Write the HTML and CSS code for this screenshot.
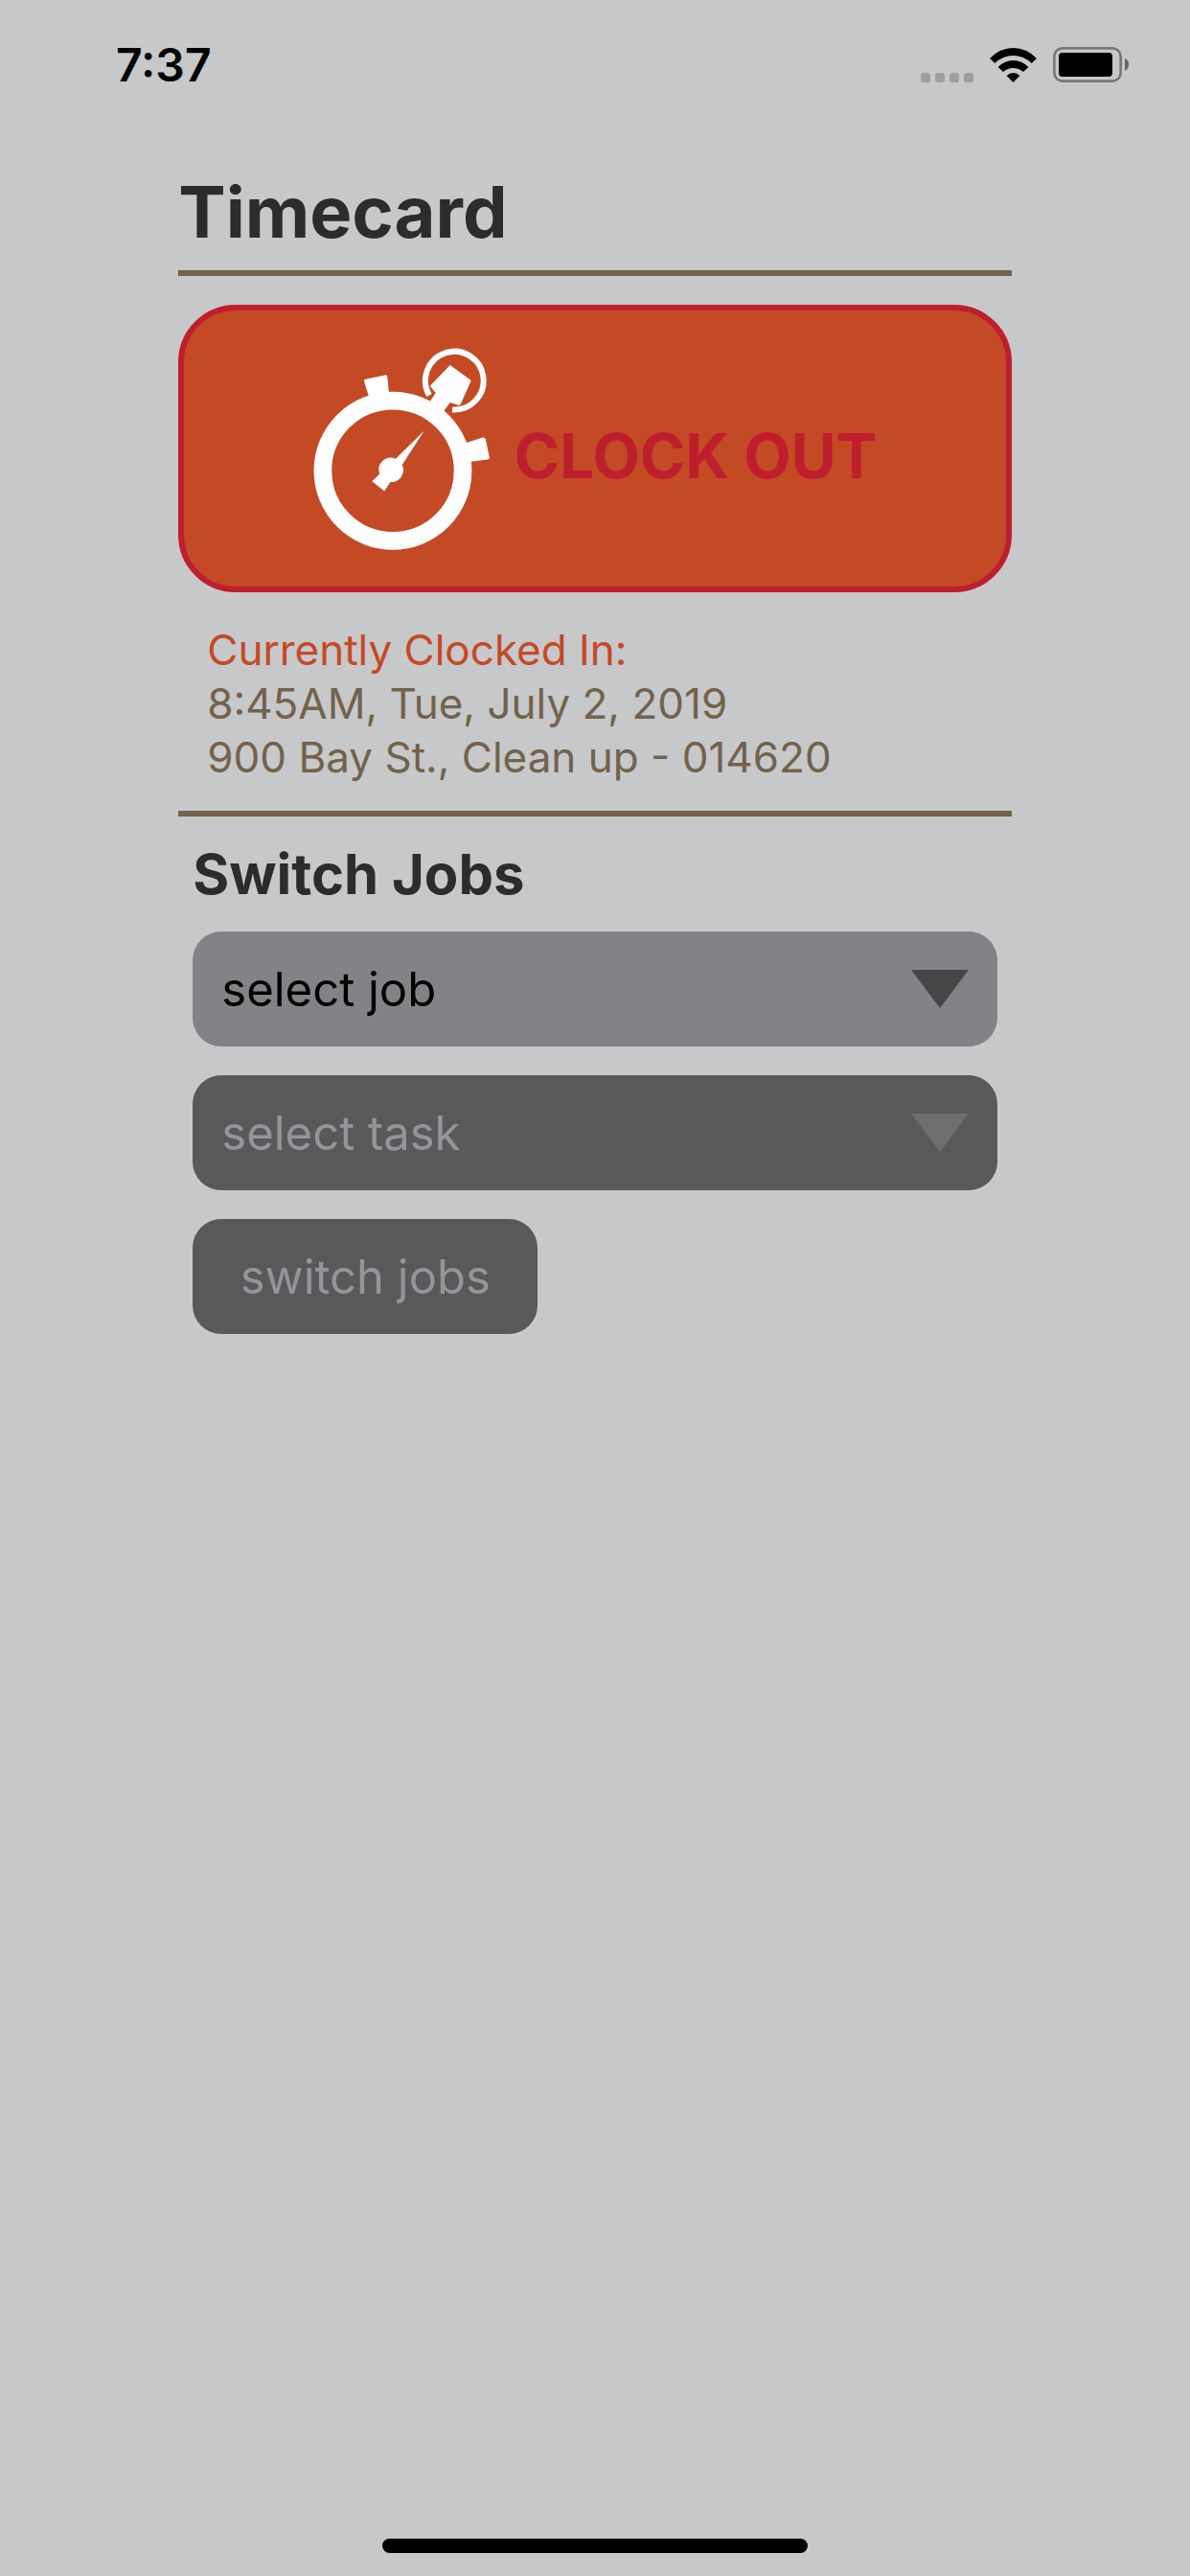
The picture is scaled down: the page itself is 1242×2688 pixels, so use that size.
FILE: index.html
```html
<!DOCTYPE html>
<html lang="en">
<head>
  <meta charset="UTF-8">
  <meta name="viewport" content="width=device-width, initial-scale=1.0">
  <title>Timecard</title>
  <link rel="stylesheet" href="styles.css">
</head>
<body>
  <header class="status-bar">
    <span class="time">7:37</span>
    <div class="status-icons">
      <svg class="signal" viewBox="0 0 55 36" aria-hidden="true">
        <rect x="0" y="26" width="10" height="10" rx="3"/>
        <rect x="15" y="26" width="10" height="10" rx="3"/>
        <rect x="30" y="26" width="10" height="10" rx="3"/>
        <rect x="45" y="26" width="10" height="10" rx="3"/>
      </svg>
      <svg class="wifi" viewBox="0 0 147 108" aria-hidden="true">
        <path d="M0 33 Q32 0 73.500 0 T147 33 L131 48 Q106 24 73.500 24 T16 48 Z"/>
        <path d="M26 60 Q47 39 73.500 39 T121 60 L105 75 Q91 63 73.500 63 T42 75 Z"/>
        <path d="M53 87 Q62 78 73.500 78 T94 87 L73.500 108 Z"/>
      </svg>
      <svg class="battery" viewBox="0 0 237 111" aria-hidden="true">
        <rect class="battery-case" x="4" y="4" width="208" height="103" rx="26"/>
        <rect x="18" y="18" width="168" height="75" rx="11"/>
        <path class="battery-tip" d="M225 36 Q237 41 237 55 T225 75 Z"/>
      </svg>
    </div>
  </header>

  <main class="container">
    <h1>Timecard</h1>

    <!-- Clock Out -->
    <section class="clock-section">
      <button type="button" class="clock-btn">
        <svg class="stopwatch" viewBox="54 38 550 632" aria-hidden="true">
          <circle class="outline" cx="302" cy="422" r="219" stroke-width="56"/>
          <path class="outline" stroke-width="18" stroke-linecap="butt" d="M416 186 A91 91 0 1 1 488 231"/>
          <path d="M212 142 Q211 137 216 136 L278 123 Q284 122 285 128 L291 190 L230 200 Z"/>
          <path d="M528 336 L583 318 Q590 317 592 323 L604 380 Q605 386 598 387 L535 395 Z"/>
          <path d="M481 92 L547 140 L514 214 Q511 219 506 217 L481 209 L460 237 L440 236 L415 210 L436 179 L418 157 Z"/>
          <path d="M400 297 L331 404 A37 37 0 0 1 294 457 L276 486 L237 455 L261 432 A37 37 0 0 1 311 385 Z"/>
        </svg>
        <span class="clock-label">CLOCK OUT</span>
      </button>
      <div class="clock-status">
        <p class="clocked-in">Currently Clocked In:</p>
        <p>8:45AM, Tue, July 2, 2019</p>
        <p>900 Bay St., Clean up - 014620</p>
      </div>
    </section>

    <!-- Switch Jobs -->
    <form class="switch-section">
      <h2>Switch Jobs</h2>
      <div class="select-box">
        <select id="job" name="job" aria-label="Job">
          <option>select job</option>
        </select>
        <svg class="arrow" viewBox="0 0 60 40" aria-hidden="true"><path d="M0 0 H60 L30 40 Z"/></svg>
      </div>
      <div class="select-box disabled">
        <select id="task" name="task" aria-label="Task" disabled>
          <option>select task</option>
        </select>
        <svg class="arrow" viewBox="0 0 60 40" aria-hidden="true"><path d="M0 0 H60 L30 40 Z"/></svg>
      </div>
      <button type="submit" class="switch-btn" disabled>switch jobs</button>
    </form>
  </main>

  <footer class="home-bar"></footer>
</body>
</html>
```
FILE: styles.css
```css
* {
  box-sizing: border-box;
}

body {
  display: flex;
  flex-direction: column;
  min-height: 100vh;
  margin: 0;
  background-color: #c7c8ca;
  font-family: Inter, "Liberation Sans", sans-serif;
  color: #2c2c2e;
}

h1,
h2,
p {
  margin: 0;
}

/* Status bar */
.status-bar {
  display: flex;
  justify-content: space-between;
  align-items: center;
  height: 135px;
  padding: 0 64px 0 121px;
  color: #000;
}

.time {
  font-size: 48px;
  font-weight: 600;
}

.status-icons {
  display: flex;
  align-items: center;
  gap: 17px;
}

.signal {
  width: 55px;
  height: 36px;
  fill: #9d9ea0;
}

.wifi {
  width: 49px;
  height: 36px;
}

.battery {
  width: 79px;
  height: 37px;
}

.battery-case {
  fill: none;
  stroke: #77787a;
  stroke-width: 8;
}

.battery-tip {
  fill: #636466;
}

/* Timecard */
.container {
  flex: 1;
  width: 70%;
  margin: 0 auto;
}

h1 {
  padding: 40px 0 15px;
  border-bottom: 6px solid #73624c;
  font-size: 74px;
  line-height: 92px;
}

.clock-section {
  padding: 30px 0 28px;
  border-bottom: 6px solid #73624c;
}

.clock-btn {
  display: flex;
  align-items: center;
  justify-content: center;
  gap: 26px;
  width: 100%;
  height: 300px;
  border: 6px solid #be1e2d;
  border-radius: 60px;
  background-color: #c44a25;
  color: #be1e2d;
  font-family: inherit;
  font-size: 64px;
  font-weight: 700;
  cursor: pointer;
}

.clock-label {
  padding-top: 14px;
}

.stopwatch {
  width: 184px;
  height: 211px;
  fill: #fff;
}

.stopwatch .outline {
  fill: none;
  stroke: #fff;
}

.clock-status {
  padding: 32px 30px 0;
  color: #73624c;
  font-size: 44px;
  line-height: 56px;
}

.clocked-in {
  color: #c44a25;
}

/* Switch jobs */
.switch-section {
  display: flex;
  flex-direction: column;
  gap: 30px;
  padding: 24px 15px;
}

h2 {
  font-size: 58px;
  line-height: 72px;
  margin-bottom: -6px;
}

.select-box {
  display: grid;
  align-items: center;
}

.select-box select,
.arrow {
  grid-area: 1 / 1;
}

.select-box select {
  appearance: none;
  width: 100%;
  height: 120px;
  padding: 0 30px;
  border: none;
  border-radius: 30px;
  background-color: #828386;
  color: #000;
  font-family: inherit;
  font-size: 49px;
  opacity: 1;
}

.arrow {
  justify-self: end;
  width: 60px;
  height: 40px;
  margin-right: 30px;
  fill: #464648;
  pointer-events: none;
}

.select-box.disabled select,
.switch-btn {
  background-color: #58595b;
  color: #939598;
}

.disabled .arrow {
  fill: #6d6e70;
}

.switch-btn {
  align-self: flex-start;
  width: 360px;
  height: 120px;
  border: none;
  border-radius: 30px;
  font-family: inherit;
  font-size: 49px;
}

/* Home indicator */
.home-bar {
  width: 444px;
  height: 15px;
  margin: 0 auto 24px;
  border-radius: 8px;
  background-color: #000;
}
```
